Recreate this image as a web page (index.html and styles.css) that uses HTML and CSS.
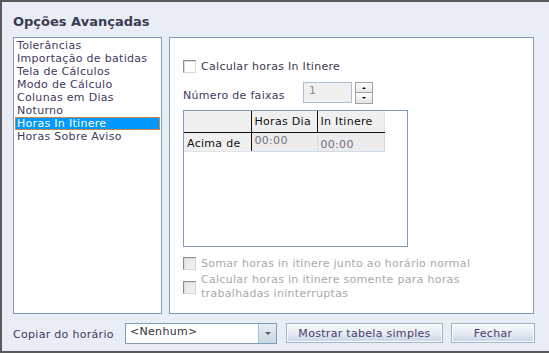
FILE: index.html
```html
<!DOCTYPE html>
<html lang="pt">
<head>
    <meta charset="UTF-8">
    <meta name="viewport" content="width=device-width, initial-scale=1.0">
    <title>Opções Avançadas</title>
    <link rel="stylesheet" href="styles.css">
</head>
<body>
    <div class="window">
        <h1 class="title">Opções Avançadas</h1>
        <div class="main">
            <ul class="nav-list">
                <li>Tolerâncias</li>
                <li>Importação de batidas</li>
                <li>Tela de Cálculos</li>
                <li>Modo de Cálculo</li>
                <li>Colunas em Dias</li>
                <li>Noturno</li>
                <li class="selected">Horas In Itinere</li>
                <li>Horas Sobre Aviso</li>
            </ul>
            <div class="panel">
                <label class="check first">
                    <span class="box"></span>
                    <span>Calcular horas In Itinere</span>
                </label>
                <div class="range-row">
                    <span class="range-label">Número de faixas</span>
                    <div class="spin-input">1</div>
                    <div class="spin-btns">
                        <span class="spin-btn"><span class="tri up"></span></span>
                        <span class="spin-btn"><span class="tri down"></span></span>
                    </div>
                </div>
                <div class="grid">
                    <table>
                        <tr class="head">
                            <th class="corner"></th>
                            <th>Horas Dia</th>
                            <th>In Itinere</th>
                        </tr>
                        <tr>
                            <th class="row-head">Acima de</th>
                            <td class="cell-a">00:00</td>
                            <td class="cell-b">00:00</td>
                        </tr>
                    </table>
                </div>
                <label class="check disabled second">
                    <span class="box"></span>
                    <span>Somar horas in itinere junto ao horário normal</span>
                </label>
                <label class="check disabled third">
                    <span class="box"></span>
                    <span>Calcular horas in itinere somente para horas<br>trabalhadas ininterruptas</span>
                </label>
            </div>
        </div>
        <div class="footer">
            <span class="footer-label">Copiar do horário</span>
            <div class="combo">
                <span class="combo-text">&lt;Nenhum&gt;</span>
                <span class="combo-btn"><span class="tri down"></span></span>
            </div>
            <button type="button" class="btn wide">Mostrar tabela simples</button>
            <button type="button" class="btn narrow">Fechar</button>
        </div>
    </div>
</body>
</html>
```

FILE: styles.css
```css
* {
    box-sizing: border-box;
}

body {
    margin: 0;
    font-family: 'DejaVu Sans', Verdana, sans-serif;
    font-size: 11px;
    letter-spacing: 0.3px;
    color: #43395f;
}

.window {
    width: 549px;
    height: 353px;
    background-color: #e9eef6;
    border: 2px solid #5a5a5a;
    border-right: none;
    padding-left: 11px;
}

.title {
    margin: 0;
    height: 35px;
    padding-top: 12px;
    font-size: 13px;
    line-height: 15px;
    letter-spacing: 0;
    font-weight: bold;
    color: #3b3b52;
}

.main {
    display: flex;
    gap: 7px;
    height: 277px;
}

.nav-list {
    width: 149px;
    margin: 0;
    padding: 1px;
    list-style: none;
    background-color: #fff;
    border: 1px solid #7f9db9;
}

.nav-list li {
    height: 13px;
    line-height: 13px;
    padding-left: 2px;
    white-space: nowrap;
}

.nav-list li.selected {
    background-color: #0099ff;
    color: #fff;
    outline: 1px solid #c9844a;
    outline-offset: -1px;
}

.panel {
    width: 365px;
    background-color: #fff;
    border: 1px solid #7f9db9;
    padding-left: 13px;
}

/* checkboxes */
.check {
    display: flex;
    align-items: center;
    gap: 5px;
    color: #3a3a4c;
}

.check.first {
    margin-top: 21px;
    height: 14px;
}

.check.second {
    margin-top: 9px;
    height: 14px;
}

.check.third {
    margin-top: 3px;
    line-height: 14px;
}

.box {
    flex: 0 0 13px;
    width: 13px;
    height: 13px;
    border: 1px solid;
    border-color: #8c8c8c #d6d6d6 #d6d6d6 #8c8c8c;
    background-color: #fff;
    box-shadow: inset 1px 1px 0 #dcdcdc;
}

.check.disabled {
    color: #a9a9a9;
}

.check.disabled .box {
    background: linear-gradient(135deg, #e2e2e2, #f6f6f6);
}

/* number of ranges */
.range-row {
    display: flex;
    align-items: flex-end;
    margin-top: 9px;
}

.range-label {
    width: 120px;
    padding-bottom: 1px;
}

.spin-input {
    width: 49px;
    height: 21px;
    background-color: #f0f0f0;
    border: 1px solid #a9bfd6;
    padding: 1px 0 0 5px;
    color: #8b8b9c;
}

.spin-btns {
    display: flex;
    flex-direction: column;
    margin-left: 3px;
    margin-bottom: -1px;
}

.spin-btn {
    display: flex;
    align-items: center;
    justify-content: center;
    width: 18px;
    height: 11px;
    border: 1px solid #a3a3a3;
    background: linear-gradient(#ffffff, #e4e4e4);
}

.spin-btn + .spin-btn {
    border-top: none;
}

.tri {
    width: 0;
    height: 0;
    border-left: 2px solid transparent;
    border-right: 2px solid transparent;
}

.tri.up {
    border-bottom: 2px solid #111;
}

.tri.down {
    border-top: 2px solid #111;
}

/* grid */
.grid {
    width: 225px;
    height: 137px;
    margin-top: 7px;
    border: 1px solid #7f9db9;
}

.grid table {
    border-collapse: collapse;
}

.grid th,
.grid td {
    padding: 0 0 0 3px;
    text-align: left;
    font-weight: normal;
    white-space: nowrap;
    vertical-align: top;
    line-height: 13px;
}

.head th {
    height: 21px;
    padding-top: 4px;
    background-color: #f0f0f0;
    color: #111;
    border-bottom: 1px solid #111;
    border-right: 1px solid #111;
}

.head th:last-child {
    border-right: 1px solid #dde5ee;
}

.head th.corner {
    width: 67px;
}

.head th:nth-child(2) {
    width: 66px;
}

.head th:nth-child(3) {
    width: 67px;
}

.row-head {
    height: 19px;
    padding-top: 4px !important;
    background-color: #f0f0f0;
    color: #111;
    border-right: 1px solid #111;
    border-bottom: 1px solid #dde5ee;
}

.grid td {
    background-color: #ececec;
    color: #6e6e82;
    border-right: 1px solid #cfdbe8;
    border-bottom: 1px solid #cfdbe8;
}

.grid td.cell-a {
    padding-top: 1px;
}

.grid td.cell-b {
    padding-top: 5px;
}

/* footer */
.footer {
    display: flex;
    align-items: center;
    height: 37px;
    padding-top: 1px;
}

.footer-label {
    width: 112px;
    padding-top: 3px;
}

.combo {
    display: flex;
    width: 152px;
    height: 21px;
    background-color: #fff;
    border: 1px solid #7f9db9;
}

.combo-text {
    flex: 1;
    padding: 1px 0 0 4px;
    color: #333;
}

.combo-btn {
    display: flex;
    align-items: center;
    justify-content: center;
    width: 18px;
    border-left: 1px solid #aebfd3;
    background: linear-gradient(#e6edf5, #c9d6e5);
}

.combo-btn .tri {
    border-left-width: 3px;
    border-right-width: 3px;
    border-top: 3px solid #555d6b;
}

.btn {
    height: 20px;
    margin-left: 9px;
    padding: 0;
    font-family: 'DejaVu Sans', Verdana, sans-serif;
    font-size: 11px;
    letter-spacing: 0.3px;
    color: #4b3e6d;
    border: 1px solid #9fb3cb;
    box-shadow: inset 0 0 0 1px #fbfcfe;
    background: linear-gradient(#fafbfd, #e8eef5 45%, #c7d4e4);
}

.btn.wide {
    width: 157px;
}

.btn.narrow {
    width: 84px;
    margin-left: 8px;
}
```
